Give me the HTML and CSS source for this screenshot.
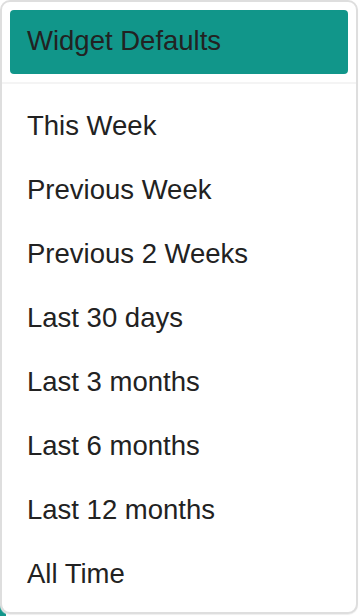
FILE: index.html
```html
<!DOCTYPE html>
<html lang="en">
<head>
    <meta charset="UTF-8">
    <meta name="viewport" content="width=device-width, initial-scale=1.0">
    <title>Date range</title>
    <link rel="stylesheet" href="styles.css">
</head>
<body>
<div class="backdrop"></div>
<div class="dropdown"> <!-- dropdown panel -->
    <div class="dropdown-head">
        <div class="dropdown-current">Widget Defaults</div>
    </div>
    <ul class="dropdown-list">
        <li class="option">This Week</li>
        <li class="option">Previous Week</li>
        <li class="option">Previous 2 Weeks</li>
        <li class="option">Last 30 days</li>
        <li class="option">Last 3 months</li>
        <li class="option">Last 6 months</li>
        <li class="option">Last 12 months</li>
        <li class="option">All Time</li>
    </ul>
</div>
</body>
</html>
```

FILE: styles.css
```css
* {
    margin: 0;
    padding: 0;
    box-sizing: border-box;
}
body {
    position: relative;
    width: 360px;
    height: 616px;
    background: #fff;
    font-family: "Liberation Sans", Arial, sans-serif;
    color: #222;
    overflow: hidden;
}
.backdrop {             /*page content peeking out under the panel corner*/
    position: absolute;
    left: 0;
    bottom: 0;
    width: 6px;
    height: 12px;
    background: #11968a;
}
.dropdown {
    position: relative;
    width: 358px;
    height: 614px;
    background: #fff;
    border: 2px solid #dedede;
    border-radius: 10px;
    box-shadow: 0 1px 1px #eee;
    display: flex;
    flex-direction: column;
}
.dropdown-head {
    padding: 8px;
    border-bottom: 2px solid #f4f4f4;
}
.dropdown-current {
    height: 64px;
    display: flex;
    align-items: center;
    padding-left: 17px;
    padding-bottom: 2px;
    background: #11968a;
    border-radius: 4px;
    font-size: 27.5px;
}
.dropdown-list {
    list-style: none;
    padding-top: 10px;
}
.option {
    height: 64px;
    display: flex;
    align-items: center;
    padding-left: 25px;
    font-size: 27.5px;
}
```
